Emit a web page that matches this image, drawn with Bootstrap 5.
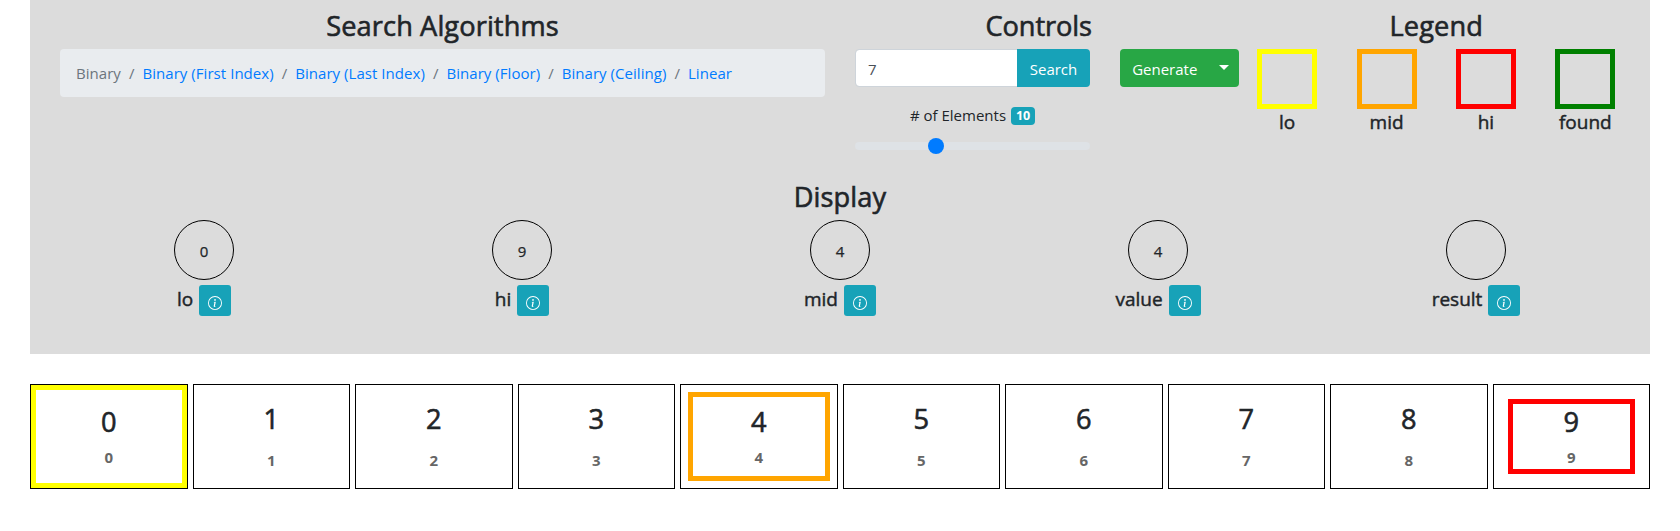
<!DOCTYPE html>
<html lang="en">
<head>
<meta charset="utf-8">
<meta name="viewport" content="width=device-width, initial-scale=1">
<title>Search Algorithms</title>
<link href="https://cdn.jsdelivr.net/npm/bootstrap@5.3.0/dist/css/bootstrap.min.css" rel="stylesheet">
<style>
  body { font-family: "Open Sans", "Noto Sans", sans-serif; font-size: 15px; line-height: 24px; color: #212529; background: #fff; overflow: hidden; }
  .panel { margin: 0 30px; padding: 9px 15px 0; height: 354px; background: #dcdcdc; }
  .panel .row { --bs-gutter-x: 30px; }
  .panel > .row { height: 171px; margin: 0; }
  h3 { font-size: 27.2px; line-height: 34px; font-weight: 500; margin-bottom: 6px; text-align: center; letter-spacing: .1px; -webkit-text-stroke: .6px; }
  .tight { letter-spacing: -.1px; }
  h5 { font-size: 19px; line-height: 24px; font-weight: 500; margin: 0; -webkit-text-stroke: .45px; }
  .crumbs { --bs-breadcrumb-divider-color: #6c757d; --bs-breadcrumb-item-padding-x: 8px; background: #e9ecef; border-radius: 4px; padding: 12px 16px; height: 48px; margin: 0; letter-spacing: .045px; }
  .crumbs .active { color: #6c757d; }
  .crumbs a { color: #007bff; text-decoration: none; }
  .btn { --bs-btn-font-size: 15px; --bs-btn-border-radius: 4px; }
  .btn-teal { background: #17a2b8; color: #fff; }
  .btn-leaf { background: #28a745; color: #fff; }
  .form-control { border-color: #ced4da; border-radius: 4px; font-size: 15px; color: #495057; height: 38px; padding-top: 8px; }
  .btn-search { width: 73px; padding: 7px 0 5px; }
  .elements { margin-top: 16px; height: 24px; gap: 5px; }
  .count { background: #17a2b8; font-size: 12.5px; line-height: 12px; padding: 3px 4px; border-radius: 4px; width: 24px; height: 18px; margin-top: 2px; }
  .form-range { display: block; height: 22px; margin-top: 8px; }
  .form-range::-webkit-slider-runnable-track { background: #dee2e6; height: 8px; }
  .form-range::-webkit-slider-thumb { background: #007bff; }
  .btn-group { width: 119px; height: 38px; }
  .btn-gen { padding: 7px 0 5px; width: 89px; flex: none; }
  .btn-drop { padding: 0; width: 30px; flex: none; }
  .btn-drop::after { border-width: 5px; border-bottom-width: 0; vertical-align: 4px; }
  .swatch { width: 60px; height: 60px; border: 5px solid; margin-bottom: 1px; }
  .c-lo { border-color: #ff0 !important; }
  .c-mid { border-color: orange !important; }
  .c-hi { border-color: red !important; }
  .c-found { border-color: green !important; }
  .dial { width: 60px; height: 60px; border: 1px solid #000; border-radius: 50%; padding-top: 1px; -webkit-text-stroke: .25px; }
  .tag { gap: 6px; padding-top: 5px; }
  .tag h5 { margin-top: -4px; }
  .btn-info-sm { display: flex; justify-content: center; width: 32px; height: 31px; padding: 11px 0 0; border: 0; border-radius: 3px; }
  .cells { display: grid; grid-template-columns: repeat(10, 1fr); gap: 5px; margin: 30px 30px 0; }
  .cell { height: 105px; border: 1px solid #000; }
  .ring { height: 100%; border: 5px solid transparent; padding: 2px; }
  .ring.inner { padding: 0; }
  .num { font-size: 27.2px; line-height: 34px; font-weight: 500; margin-top: -2px; -webkit-text-stroke: .6px; }
  .idx { font-weight: 700; line-height: 24px; color: #666; margin-top: 12px; }
  .marked .num { margin-top: 1px; }
  .marked .idx { margin-top: 6px; }
</style>
</head>
<body>
<svg class="d-none"><symbol id="info" viewBox="0 0 16 16"><path fill-rule="evenodd" d="M8 15A7 7 0 1 0 8 1a7 7 0 0 0 0 14zm0 1A8 8 0 1 0 8 0a8 8 0 0 0 0 16z"/><path d="M8.93 6.588l-2.29.287-.082.38.45.083c.294.07.352.176.288.469l-.738 3.468c-.194.897.105 1.319.808 1.319.545 0 1.178-.252 1.465-.598l.088-.416c-.2.176-.492.246-.686.246-.275 0-.375-.193-.304-.533L8.93 6.588z"/><circle cx="8" cy="4.5" r="1"/></symbol></svg>
<main>
<section class="panel">
  <div class="row">
    <div class="col-6">
      <h3>Search Algorithms</h3>
      <ol class="breadcrumb crumbs">
        <li class="breadcrumb-item active">Binary</li>
        <li class="breadcrumb-item"><a href="#">Binary (First Index)</a></li>
        <li class="breadcrumb-item"><a href="#">Binary (Last Index)</a></li>
        <li class="breadcrumb-item"><a href="#">Binary (Floor)</a></li>
        <li class="breadcrumb-item"><a href="#">Binary (Ceiling)</a></li>
        <li class="breadcrumb-item"><a href="#">Linear</a></li>
      </ol>
    </div>
    <div class="col-3">
      <h3 class="tight">Controls</h3>
      <div class="row">
        <div class="col-8 text-center">
          <div class="input-group flex-nowrap">
            <input class="form-control" type="text" value="7">
            <button class="btn btn-teal btn-search" type="button">Search</button>
          </div>
          <div class="elements d-flex justify-content-center align-items-center"><span>#&nbsp;of Elements</span><span class="badge count">10</span></div>
          <input class="form-range" type="range" min="0" max="30" value="10">
        </div>
        <div class="col-4">
          <div class="btn-group">
            <button class="btn btn-leaf btn-gen" type="button">Generate</button>
            <button class="btn btn-leaf dropdown-toggle dropdown-toggle-split btn-drop" type="button"></button>
          </div>
        </div>
      </div>
    </div>
    <div class="col-3 p-0 text-center">
      <h3>Legend</h3>
      <div class="d-flex">
        <div class="col-3"><div class="swatch c-lo mx-auto"></div><h5>lo</h5></div>
        <div class="col-3"><div class="swatch c-mid mx-auto"></div><h5>mid</h5></div>
        <div class="col-3"><div class="swatch c-hi mx-auto"></div><h5>hi</h5></div>
        <div class="col-3"><div class="swatch c-found mx-auto"></div><h5>found</h5></div>
      </div>
    </div>
  </div>
  <h3>Display</h3>
  <div class="d-flex text-center">
    <div class="col"><div class="dial mx-auto d-flex align-items-center justify-content-center">0</div><div class="tag d-flex justify-content-center align-items-center"><h5>lo</h5><button class="btn btn-teal btn-info-sm"><svg width="14" height="14" fill="currentColor"><use href="#info"/></svg></button></div></div>
    <div class="col"><div class="dial mx-auto d-flex align-items-center justify-content-center">9</div><div class="tag d-flex justify-content-center align-items-center"><h5>hi</h5><button class="btn btn-teal btn-info-sm"><svg width="14" height="14" fill="currentColor"><use href="#info"/></svg></button></div></div>
    <div class="col"><div class="dial mx-auto d-flex align-items-center justify-content-center">4</div><div class="tag d-flex justify-content-center align-items-center"><h5>mid</h5><button class="btn btn-teal btn-info-sm"><svg width="14" height="14" fill="currentColor"><use href="#info"/></svg></button></div></div>
    <div class="col"><div class="dial mx-auto d-flex align-items-center justify-content-center">4</div><div class="tag d-flex justify-content-center align-items-center"><h5>value</h5><button class="btn btn-teal btn-info-sm"><svg width="14" height="14" fill="currentColor"><use href="#info"/></svg></button></div></div>
    <div class="col"><div class="dial mx-auto d-flex align-items-center justify-content-center"></div><div class="tag d-flex justify-content-center align-items-center"><h5>result</h5><button class="btn btn-teal btn-info-sm"><svg width="14" height="14" fill="currentColor"><use href="#info"/></svg></button></div></div>
  </div>
</section>
<section class="cells text-center" id="cells"></section>
</main>
<script src="https://cdn.jsdelivr.net/npm/bootstrap@5.3.0/dist/js/bootstrap.bundle.min.js"></script>
<script>
  const marks = { 0: ['c-lo', '', ''], 4: ['', 'c-mid', ''], 9: ['', '', 'c-hi'] };
  document.getElementById('cells').innerHTML = Array.from({ length: 10 }, (_, i) => {
    const m = marks[i] || ['', '', ''];
    return `<div class="cell ${marks[i] ? 'marked' : ''}"><div class="ring ${m[0]}"><div class="ring ${m[1]}"><div class="ring inner ${m[2]}"><div class="num">${i}</div><div class="idx">${i}</div></div></div></div></div>`;
  }).join('');
</script>
</body>
</html>
